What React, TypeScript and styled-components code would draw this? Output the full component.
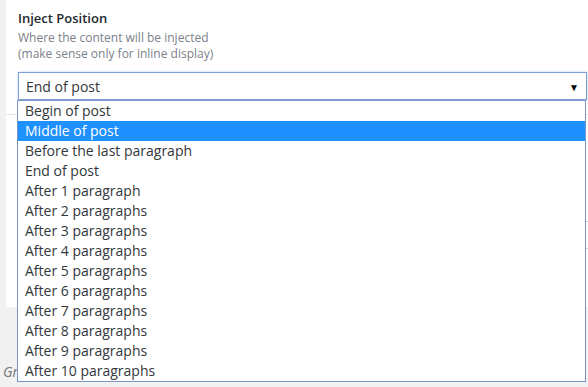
import React from "react";
import styled, { createGlobalStyle } from "styled-components";

const Global = createGlobalStyle`
  html, body { margin: 0; padding: 0; background: #f1f1f1; }
  body { font-family: "Open Sans", "Liberation Sans", sans-serif; overflow: hidden; }
`;

const Page = styled.div`
  width: 588px;
  height: 387px;
  display: flex;
  flex-direction: column;
  padding-left: 6px;
  box-sizing: border-box;
  position: relative;
  background: #f1f1f1;
`;

const Card = styled.div`
  background: #fff;
  width: 600px;
  height: 307px;
  box-sizing: border-box;
  display: flex;
  flex-direction: column;
`;

const Section = styled.div`
  padding: 9px 0 0 12px;
  display: flex;
  flex-direction: column;
`;

const Label = styled.div`
  font-size: 13px;
  font-weight: 600;
  color: #23282d;
  line-height: 18px;
`;

const Desc = styled.div`
  font-size: 12px;
  color: #7a7f8a;
  line-height: 16px;
  margin-top: 3px;
`;

const SelectBox = styled.div`
  margin-top: 10px;
  width: 569px;
  height: 28px;
  box-sizing: border-box;
  border: 1px solid #7e9ed6;
  box-shadow: 0 0 2px rgba(91, 157, 217, 0.5);
  display: flex;
  align-items: center;
  justify-content: space-between;
  padding: 0 7px 0 7px;
  font-size: 14px;
  color: #32373c;
  background: #fff;
`;

const Arrow = styled.span`
  font-size: 10px;
  color: #000;
  margin-top: 1px;
`;

const Divider = styled.div`
  margin-top: 14px;
  height: 1px;
  background: #e5e5e5;
`;

const GhostInput = styled.div`
  margin: 106px 0 0 11px;
  height: 26px;
  border-top: 1px solid #ccc;
  border-bottom: 1px solid #ccc;
`;

const Footer = styled.div`
  font-size: 14px;
  font-style: italic;
  color: #72777c;
  padding-top: 56px;
  margin-left: -3px;
  line-height: 18px;
`;

const List = styled.ul`
  position: absolute;
  left: 17px;
  top: 100px;
  width: 569px;
  margin: 0;
  padding: 0;
  list-style: none;
  box-sizing: border-box;
  border: 1px solid #7a96c9;
  background: #fff;
`;

const Item = styled.li<{ $active?: boolean }>`
  height: 20px;
  line-height: 20px;
  padding-left: 7px;
  font-size: 14px;
  color: ${(p) => (p.$active ? "#fff" : "#32373c")};
  background: ${(p) => (p.$active ? "#1e90ff" : "transparent")};
`;

const options = [
  "Begin of post",
  "Middle of post",
  "Before the last paragraph",
  "End of post",
  "After 1 paragraph",
  "After 2 paragraphs",
  "After 3 paragraphs",
  "After 4 paragraphs",
  "After 5 paragraphs",
  "After 6 paragraphs",
  "After 7 paragraphs",
  "After 8 paragraphs",
  "After 9 paragraphs",
  "After 10 paragraphs",
];

export default function App() {
  return (
    <>
      <Global />
      <Page>
        <Card>
          <Section>
            <Label>Inject Position</Label>
            <Desc>
              Where the content will be injected
              <br />
              (make sense only for inline display)
            </Desc>
            <SelectBox>
              <span>End of post</span>
              <Arrow>▼</Arrow>
            </SelectBox>
          </Section>
          <Divider />
          <GhostInput />
        </Card>
        <Footer>Gr</Footer>
        <List>
          {options.map((o) => (
            <Item key={o} $active={o === "Middle of post"}>
              {o}
            </Item>
          ))}
        </List>
      </Page>
    </>
  );
}
